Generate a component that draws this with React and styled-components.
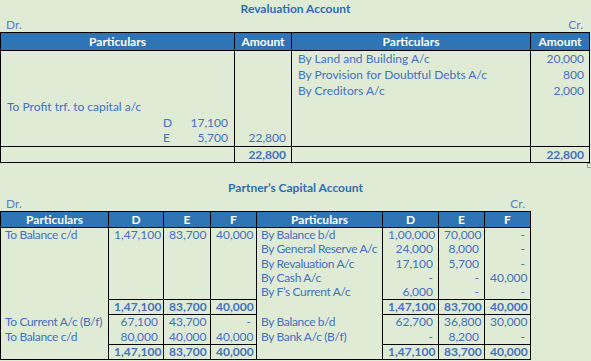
import React from "react";
import styled, { createGlobalStyle } from "styled-components";

const GlobalStyle = createGlobalStyle`
  html, body {
    margin: 0;
    padding: 0;
    background: #e0ebd6;
  }
  body {
    font-family: Lato, "Open Sans", sans-serif;
    font-size: 12px;
    color: #4470bd;
  }
`;

const Page = styled.div`
  width: 591px;
  height: 361px;
  overflow: hidden;
`;

const Section = styled.section`
  margin-top: ${(p) => p.$top || 0}px;
`;

const Title = styled.div`
  text-align: center;
  font-weight: 700;
  color: #2f6db0;
  line-height: 18px;
  height: 18px;
`;

const Sides = styled.div`
  display: flex;
  justify-content: space-between;
  box-sizing: border-box;
  width: ${(p) => p.$w}px;
  padding: 0 6px;
  line-height: 14px;
  height: 14px;
  color: #5b80bd;
`;

const TableWrap = styled.div`
  position: relative;
  width: ${(p) => p.$w}px;
`;

// little excel resize handle under the first table
const Handle = styled.span`
  position: absolute;
  right: -2px;
  bottom: -5px;
  width: 3px;
  height: 3px;
  border: 1px solid #9aa39a;
  border-right: none;
`;

const Ledger = styled.table`
  border-collapse: collapse;
  table-layout: fixed;
  width: ${(p) => p.$w}px;
  border: 1px solid #000;
`;

const Head = styled.th`
  background: #2f75b5;
  color: #fff;
  font-weight: 700;
  border: 1px solid #000;
  height: ${(p) => p.$h}px;
  padding: 0;
  text-align: center;
  line-height: 14px;
`;

const Row = styled.tr`
  height: ${(p) => p.$h}px;
`;

const Cell = styled.td`
  border-left: 1px solid #000;
  border-right: 1px solid #000;
  padding: 0 ${(p) => (p.$num ? "5px" : p.$tight ? "4px" : "6px")};
  text-align: ${(p) => (p.$num ? "right" : "left")};
  letter-spacing: ${(p) => (p.$tight ? "-0.35px" : "0")};
  white-space: nowrap;
  overflow: hidden;
  line-height: 14px;
  ${(p) =>
    p.$total &&
    `
    border-top: 1px solid #000;
    border-bottom: 1px solid #000;
    font-weight: 700;
  `}
`;

const Split = styled.div`
  display: flex;
  justify-content: flex-end;
`;

const SplitName = styled.span`
  width: 20px;
`;

const SplitValue = styled.span`
  width: 45px;
  text-align: right;
`;

const revalRows = [
  { l: "", la: "", r: "By Land and Building A/c", ra: "20,000" },
  { l: "", la: "", r: "By Provision for Doubtful Debts A/c", ra: "800" },
  { l: "", la: "", r: "By Creditors A/c", ra: "2,000" },
  { l: "To Profit trf. to capital a/c", la: "", r: "", ra: "" },
  { split: ["D", "17,100"], la: "", r: "", ra: "" },
  { split: ["E", "5,700"], la: "22,800", r: "", ra: "" },
];

const capitalTop = [
  ["To Balance c/d", "1,47,100", "83,700", "40,000", "By Balance b/d", "1,00,000", "70,000", "-"],
  ["", "", "", "", "By General Reserve A/c", "24,000", "8,000", "-"],
  ["", "", "", "", "By Revaluation A/c", "17,100", "5,700", "-"],
  ["", "", "", "", "By Cash A/c", "-", "-", "40,000"],
  ["", "", "", "", "By F\u2019s Current A/c", "6,000", "-", "-"],
];

const capitalBottom = [
  ["To Current A/c (B/f)", "67,100", "43,700", "-", "By Balance b/d", "62,700", "36,800", "30,000"],
  ["To Balance c/d", "80,000", "40,000", "40,000", "By Bank A/c (B/f)", "-", "8,200", "-"],
];

const capitalTotal = ["1,47,100", "83,700", "40,000"];

function CapitalRow({ cells, h }) {
  return (
    <Row $h={h}>
      {cells.map((c, i) => (
        <Cell key={i} $num={i % 4 !== 0} $tight={i % 4 === 0}>
          {c}
        </Cell>
      ))}
    </Row>
  );
}

function CapitalTotal({ h }) {
  return (
    <Row $h={h}>
      <Cell />
      {capitalTotal.map((v, i) => (
        <Cell key={"l" + i} $num $total>
          {v}
        </Cell>
      ))}
      <Cell />
      {capitalTotal.map((v, i) => (
        <Cell key={"r" + i} $num $total>
          {v}
        </Cell>
      ))}
    </Row>
  );
}

export default function App() {
  const capCols = [108, 55, 47, 46, 126, 56, 46, 46];
  return (
    <Page>
      <GlobalStyle />
      <Section>
        <Title>Revaluation Account</Title>
        <Sides $w={589}>
          <span>Dr.</span>
          <span>Cr.</span>
        </Sides>
        <TableWrap $w={589}>
          <Ledger $w={589}>
            <colgroup>
              <col style={{ width: 234 }} />
              <col style={{ width: 57 }} />
              <col style={{ width: 239 }} />
              <col style={{ width: 59 }} />
            </colgroup>
            <thead>
              <tr>
                <Head $h={17}>Particulars</Head>
                <Head $h={17}>Amount</Head>
                <Head $h={17}>Particulars</Head>
                <Head $h={17}>Amount</Head>
              </tr>
            </thead>
            <tbody>
              {revalRows.map((r, i) => (
                <Row key={i} $h={16}>
                  <Cell>
                    {r.split ? (
                      <Split>
                        <SplitName>{r.split[0]}</SplitName>
                        <SplitValue>{r.split[1]}</SplitValue>
                      </Split>
                    ) : (
                      r.l
                    )}
                  </Cell>
                  <Cell $num>{r.la}</Cell>
                  <Cell>{r.r}</Cell>
                  <Cell $num>{r.ra}</Cell>
                </Row>
              ))}
              <Row $h={16}>
                <Cell $total />
                <Cell $num $total>22,800</Cell>
                <Cell $total />
                <Cell $num $total>22,800</Cell>
              </Row>
            </tbody>
          </Ledger>
          <Handle />
        </TableWrap>
      </Section>

      <Section $top={16}>
        <Title>Partner’s Capital Account</Title>
        <Sides $w={531}>
          <span>Dr.</span>
          <span>Cr.</span>
        </Sides>
        <Ledger $w={531}>
          <colgroup>
            {capCols.map((w, i) => (
              <col key={i} style={{ width: w }} />
            ))}
          </colgroup>
          <thead>
            <tr>
              {["Particulars", "D", "E", "F", "Particulars", "D", "E", "F"].map(
                (h, i) => (
                  <Head key={i} $h={15}>
                    {h}
                  </Head>
                )
              )}
            </tr>
          </thead>
          <tbody>
            {capitalTop.map((c, i) => (
              <CapitalRow key={i} cells={c} h={14.4} />
            ))}
            <CapitalTotal h={15} />
            {capitalBottom.map((c, i) => (
              <CapitalRow key={i} cells={c} h={15} />
            ))}
            <CapitalTotal h={15} />
          </tbody>
        </Ledger>
      </Section>
    </Page>
  );
}
